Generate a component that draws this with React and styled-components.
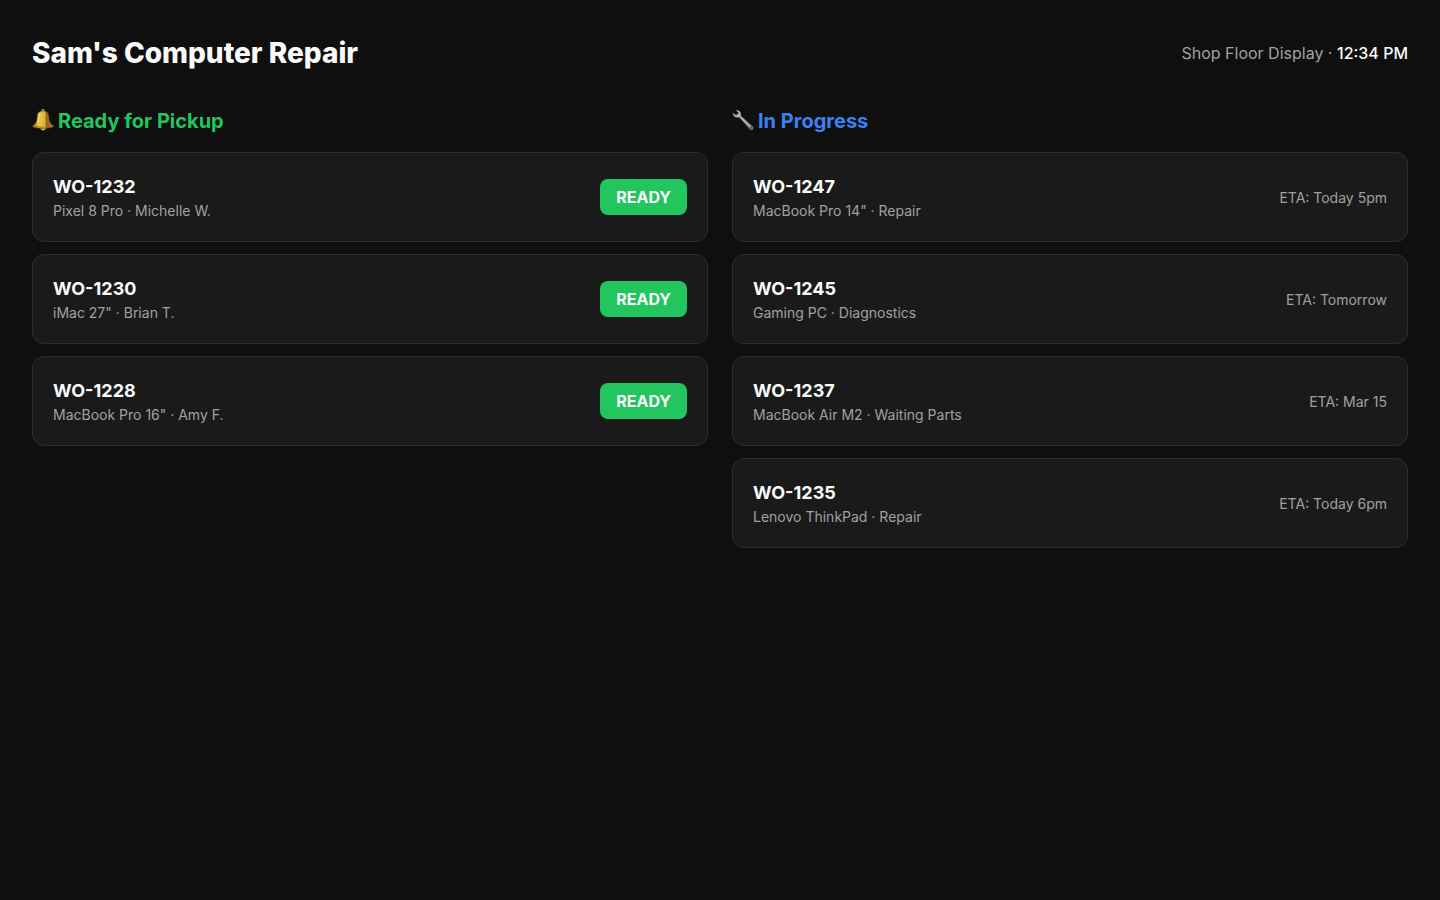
import styled, { createGlobalStyle } from "styled-components";

const GlobalStyle = createGlobalStyle`
  * {
    box-sizing: border-box;
    margin: 0;
    padding: 0;
  }
  body {
    background-color: #0f0f0f;
    color: #fafafa;
    font-family: Inter, "Liberation Sans", sans-serif;
    line-height: 1.5;
    -webkit-font-smoothing: antialiased;
  }
`;

const Page = styled.main`
  min-height: 100vh;
  padding: 32px;
`;

const Header = styled.header`
  display: flex;
  justify-content: space-between;
  align-items: center;
  margin-bottom: 32px;
`;

const Title = styled.h1`
  font-size: 28px;
  font-weight: 800;
`;

const Clock = styled.p`
  font-size: 16px;
  color: #a1a1a1;
`;

const Time = styled.time`
  font-weight: 500;
  color: #fafafa;
`;

const Board = styled.div`
  display: grid;
  grid-template-columns: 1fr 1fr;
  gap: 24px;
`;

const Heading = styled.h2`
  display: flex;
  align-items: center;
  gap: 4px;
  margin-bottom: 16px;
  font-size: 20px;
  font-weight: 700;
  color: ${(props) => props.$color};
  svg {
    flex: none;
  }
`;

const List = styled.ul`
  display: flex;
  flex-direction: column;
  gap: 12px;
  list-style: none;
`;

const Card = styled.li`
  display: flex;
  justify-content: space-between;
  align-items: center;
  padding: 20px;
  background-color: #1a1a1a;
  border: 1px solid #2e2e2e;
  border-radius: 12px;
`;

const OrderId = styled.h3`
  font-size: 18px;
  font-weight: 700;
`;

const Detail = styled.p`
  font-size: 14px;
  color: #a1a1a1;
`;

const Badge = styled.span`
  padding: 6px 16px;
  border-radius: 8px;
  background-color: #22c55e;
  color: #fafafa;
  font-size: 16px;
  font-weight: 700;
`;

const BellIcon = () => (
  <svg width="22" height="24" viewBox="0 1 22 24" aria-hidden="true">
    <defs>
      <linearGradient id="bell" x1="0" x2="1" y1="0" y2="0">
        <stop offset="0.1" stopColor="#b98a25" />
        <stop offset="0.3" stopColor="#e9c646" />
        <stop offset="0.58" stopColor="#dcb33c" />
        <stop offset="0.66" stopColor="#8f6a1c" />
        <stop offset="1" stopColor="#a5802c" />
      </linearGradient>
    </defs>
    <circle cx="11" cy="2.4" r="1.6" fill="#a98532" stroke="#5e5036" strokeWidth="0.5" />
    <ellipse cx="11.2" cy="20.4" rx="2.6" ry="2" fill="#d2a83a" />
    <path
      d="M11 3C7 3 5.4 5.2 5.2 8.6C5 13 4.4 15.3 1.4 17.2C0.3 18.1 0.5 19 2 19.3C7 20.8 15 20.8 20.2 19.3C21.8 18.9 21.7 18 20.5 17.2C17.8 15.3 17 13 16.8 8.6C16.6 5.2 15 3 11 3Z"
      fill="url(#bell)"
      stroke="#5e5036"
      strokeWidth="0.6"
    />
    <path d="M1.6 18C6 19.4 10 19.5 13 18.9" fill="none" stroke="#9b7424" strokeWidth="0.9" />
    <path d="M8 5.5C6.8 7 7 11.5 6 15" fill="none" stroke="#f4d860" strokeWidth="1.6" />
  </svg>
);

const WrenchIcon = () => (
  <svg width="22" height="24" viewBox="0 1 22 24" aria-hidden="true">
    <defs>
      <linearGradient id="wrench" x1="0" x2="1" y1="0" y2="1">
        <stop offset="0" stopColor="#c9c9c9" />
        <stop offset="0.5" stopColor="#a2a2a2" />
        <stop offset="1" stopColor="#777777" />
      </linearGradient>
    </defs>
    <path
      d="M4 2.4C6.4 1.8 8.8 3.4 8.9 6C8.9 7 8.8 7.6 9.2 8.2L20.5 18.2C21.6 19.3 21.7 20.6 20.8 21.5C19.8 22.4 18.6 22.1 17.6 21L7.7 9.8C7.1 9.4 6.4 9.6 5.4 9.5C2.8 9.3 0.8 7.4 0.8 4.9L3.7 6.9L6 6.3L6.4 4.4Z"
      fill="url(#wrench)"
      stroke="#555555"
      strokeWidth="0.4"
    />
    <path d="M9.5 9.8L17.8 18.3" stroke="#d6d6d6" strokeWidth="0.7" />
    <circle cx="19.2" cy="20" r="0.8" fill="#2a2a2a" />
  </svg>
);

const readyOrders = [
  { id: "WO-1232", detail: "Pixel 8 Pro · Michelle W." },
  { id: "WO-1230", detail: 'iMac 27" · Brian T.' },
  { id: "WO-1228", detail: 'MacBook Pro 16" · Amy F.' },
];

const activeOrders = [
  { id: "WO-1247", detail: 'MacBook Pro 14" · Repair', eta: "Today 5pm" },
  { id: "WO-1245", detail: "Gaming PC · Diagnostics", eta: "Tomorrow" },
  { id: "WO-1237", detail: "MacBook Air M2 · Waiting Parts", eta: "Mar 15" },
  { id: "WO-1235", detail: "Lenovo ThinkPad · Repair", eta: "Today 6pm" },
];

const Order = ({ order }) => (
  <Card>
    <div>
      <OrderId>{order.id}</OrderId>
      <Detail>{order.detail}</Detail>
    </div>
    {order.eta ? <Detail>ETA: {order.eta}</Detail> : <Badge>READY</Badge>}
  </Card>
);

const Column = ({ title, color, icon, orders }) => (
  <section>
    <Heading $color={color}>
      {icon}
      {title}
    </Heading>
    <List>
      {orders.map((order) => (
        <Order key={order.id} order={order} />
      ))}
    </List>
  </section>
);

const App = () => {
  return (
    <>
      <GlobalStyle />
      <Page>
        <Header>
          <Title>Sam's Computer Repair</Title>
          <Clock>
            Shop Floor Display · <Time>12:34 PM</Time>
          </Clock>
        </Header>
        <Board>
          <Column
            title="Ready for Pickup"
            color="#22c55e"
            icon={<BellIcon />}
            orders={readyOrders}
          />
          <Column
            title="In Progress"
            color="#3b82f6"
            icon={<WrenchIcon />}
            orders={activeOrders}
          />
        </Board>
      </Page>
    </>
  );
};

export default App;
